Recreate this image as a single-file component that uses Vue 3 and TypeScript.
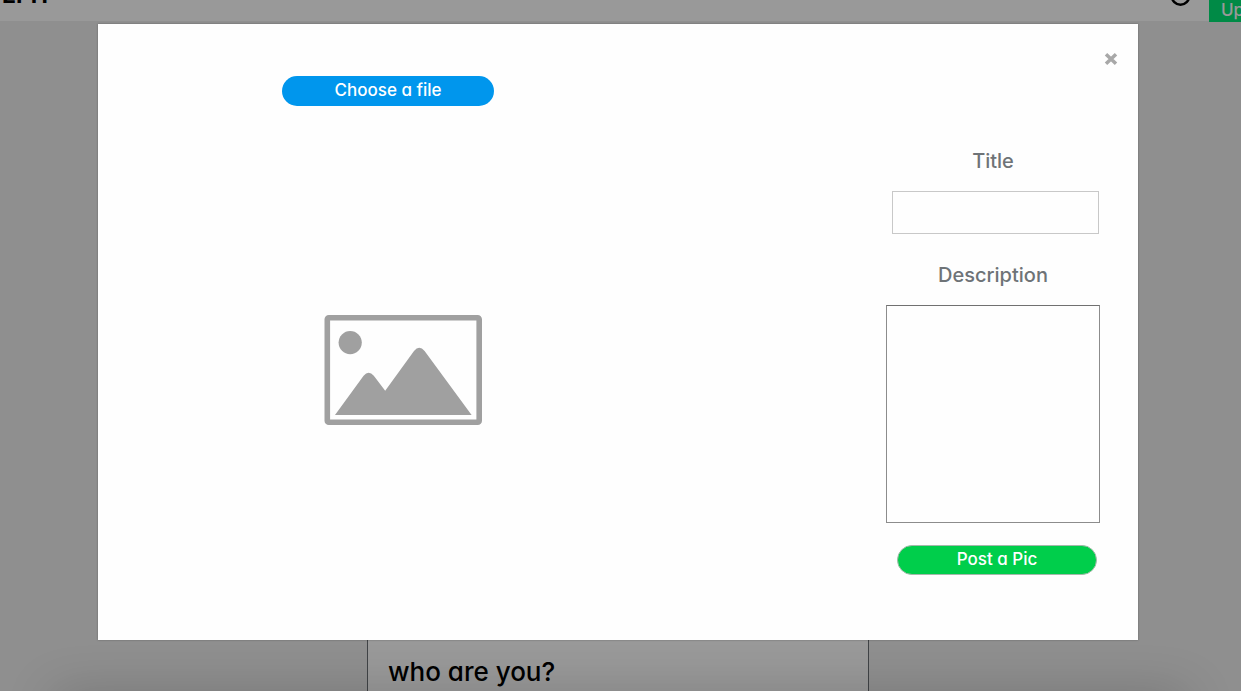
<script setup lang="ts">
import { ref } from 'vue'

const title = ref('')
const description = ref('')
</script>

<template>
  <div class="app">
    <div class="page">
      <header class="topbar">
        <a class="brand" href="#">EPH</a>
        <a class="profile" href="#" aria-label="Profile">
          <svg width="20" height="20" viewBox="0 0 20 20" aria-hidden="true">
            <circle cx="9.5" cy="10" r="8.7" fill="none" stroke="#000" stroke-width="2.6" />
          </svg>
        </a>
        <button class="upload" type="button">Upload</button>
      </header>
      <main class="feed">
        <article class="post">
          <div class="post-photo"></div>
          <h2 class="post-title">who are you?</h2>
        </article>
      </main>
    </div>

    <div class="overlay">
      <form class="modal" role="dialog" aria-label="Post a Pic" @submit.prevent>
        <button class="close" type="button" aria-label="Close">
          <svg width="14" height="14" viewBox="0 0 14 14" aria-hidden="true">
            <path d="M2 2.2 12 11.8M12 2.2 2 11.8" fill="none" stroke="#a8a8a8" stroke-width="3.5" />
          </svg>
        </button>

        <section class="picker">
          <button class="pill choose" type="button">Choose a file</button>
          <div class="preview">
            <svg width="158" height="110" viewBox="0 0 158 110" role="img" aria-label="No image selected">
              <rect x="3.3" y="2.8" width="151.9" height="104.4" rx="1.5" fill="none" stroke="#a0a0a0" stroke-width="5.6" />
              <circle cx="26.2" cy="27.6" r="11.6" fill="#a0a0a0" />
              <path d="M11 100 39.6 60.8Q44.6 54.8 49.8 60.8L61.2 75.8 90 36Q95.2 29.6 100.6 36L147.6 100Z" fill="#a0a0a0" />
            </svg>
          </div>
        </section>

        <section class="details">
          <div class="field">
            <label for="pic-title">Title</label>
            <input id="pic-title" v-model="title" type="text" />
          </div>
          <div class="field">
            <label for="pic-description">Description</label>
            <textarea id="pic-description" v-model="description"></textarea>
          </div>
          <button class="pill submit" type="submit">Post a Pic</button>
        </section>
      </form>
    </div>
  </div>
</template>

<style>
body {
  background: #eee;
}
</style>

<style scoped>
.app,
.app * {
  box-sizing: border-box;
}

.app {
  font-family: Inter, "Open Sans", sans-serif;
  font-feature-settings: "cv11" 1, "ss03" 1;
}

.page {
  position: fixed;
  inset: 0;
  overflow: hidden;
  background: #eee;
}

.topbar {
  display: grid;
  grid-template-columns: 1fr 20px 32px;
  column-gap: 18px;
  align-items: end;
  height: 64px;
  margin-top: -43px;
  background: #fff;
}

.brand {
  padding: 0 0 16px 2px;
  color: #000;
  font-size: 23px;
  font-weight: 700;
  line-height: 20px;
  text-decoration: none;
}

.profile {
  display: flex;
  padding-bottom: 15px;
}

.upload {
  width: 90px;
  height: 40px;
  margin-bottom: -1px;
  padding: 16px 12px 0;
  border: 0;
  background: #00e676;
  color: #fff;
  font: inherit;
  font-size: 17px;
  font-weight: 500;
  line-height: 20px;
  text-align: left;
}

.feed {
  padding: 20px 5px 0 0;
}

.post {
  width: 502px;
  max-width: 100%;
  margin: 0 auto;
  padding: 0 20px 20px;
  border: 1px solid #6c7075;
  background: #fff;
}

.post-photo {
  height: 614px;
}

.post-title {
  margin: 0;
  font-size: 26px;
  font-weight: 500;
  line-height: 32px;
}

.overlay {
  position: fixed;
  inset: 0;
  padding: 24px 103px 24px 98px;
  overflow: hidden;
  background: rgba(0, 0, 0, 0.4);
}

.overlay::after {
  content: "";
  position: absolute;
  right: 60px;
  bottom: -30px;
  left: 60px;
  height: 20px;
  box-shadow: 0 0 50px 6px rgba(0, 0, 0, 0.22);
}

.modal {
  position: relative;
  display: grid;
  grid-template-columns: minmax(0, 1fr) 214px;
  padding: 52px 38px 6px 184px;
  background: #fefefe;
  box-shadow: 0 0 2px rgba(0, 0, 0, 0.3);
}

.close {
  position: absolute;
  top: 28px;
  right: 20px;
  display: flex;
  padding: 0;
  border: 0;
  background: none;
}

.pill {
  height: 30px;
  padding: 0 16px 2px;
  border: 0;
  border-radius: 15px;
  color: #fff;
  font: inherit;
  font-size: 17px;
  font-weight: 500;
  line-height: 26px;
}

.choose {
  display: block;
  width: 212px;
  background: #0096ed;
}

.preview {
  display: flex;
  align-items: center;
  justify-content: center;
  width: 242px;
  height: 528px;
}

.details {
  display: flex;
  flex-direction: column;
  align-items: center;
  padding-top: 73px;
}

.field {
  display: flex;
  flex-direction: column;
  align-items: center;
  gap: 18px;
  width: 100%;
  margin-bottom: 29px;
}

.field label {
  color: #6e7377;
  font-size: 20px;
  font-weight: 500;
  line-height: 24px;
}

.field input {
  align-self: flex-end;
  width: 207px;
  height: 43px;
  margin-right: 1px;
  padding: 8px;
  border: 1px solid #c8c8c8;
  background: #fefefe;
  font: inherit;
}

.field textarea {
  display: block;
  width: 100%;
  height: 218px;
  padding: 8px;
  border: 1px solid #8c8c8c;
  border-top-color: #707070;
  background: #fefefe;
  font: inherit;
  resize: none;
}

.field:nth-of-type(2) {
  margin-bottom: 22px;
}

.submit {
  align-self: flex-end;
  width: 200px;
  margin-right: 3px;
  border: 1px solid #a4b8aa;
  background: #00ce4b;
}
</style>
